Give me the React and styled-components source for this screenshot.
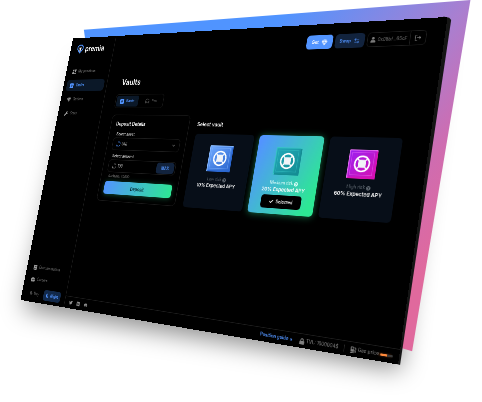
import React, { useEffect, useState } from "react";
import styled, { createGlobalStyle, css } from "styled-components";
import {
  FaTwitter, FaMedium, FaDiscord, FaLock, FaGasPump, FaUser, FaCheck, FaBook,
  FaBriefcase, FaMoon, FaSun, FaGem, FaWrench, FaQuestionCircle, FaArrowRight,
} from "react-icons/fa";
import { LogOut, ArrowLeftRight, ChevronDown, Gem, Headphones } from "lucide-react";

const PLANE = { width: 720, height: 500 };
const SCENE_WIDTH = 482;
/* top-left, top-right, bottom-right and bottom-left of the tilted screen */
const CORNERS = [[73, 38.5], [447.5, 17], [398, 364.5], [20.5, 300]];

/* Perspective matrix that lays the flat screen onto its four corners. */
function planeMatrix(scale) {
  const [[x0, y0], [x1, y1], [x2, y2], [x3, y3]] = CORNERS.map(([x, y]) => [x * scale, y * scale]);
  const dx1 = x1 - x2, dx2 = x3 - x2, sx = x0 - x1 + x2 - x3;
  const dy1 = y1 - y2, dy2 = y3 - y2, sy = y0 - y1 + y2 - y3;
  const det = dx1 * dy2 - dx2 * dy1;
  const g = (sx * dy2 - dx2 * sy) / det;
  const h = (dx1 * sy - sx * dy1) / det;
  const { width: w, height: t } = PLANE;
  return `matrix3d(${[
    (x1 - x0 + g * x1) / w, (y1 - y0 + g * y1) / w, 0, g / w,
    (x3 - x0 + h * x3) / t, (y3 - y0 + h * y3) / t, 0, h / t,
    0, 0, 1, 0,
    x0, y0, 0, 1,
  ].join(",")})`;
}

function useSceneScale() {
  const read = () => window.innerWidth / SCENE_WIDTH;
  const [scale, setScale] = useState(read);
  useEffect(() => {
    const update = () => setScale(read());
    window.addEventListener("resize", update);
    return () => window.removeEventListener("resize", update);
  }, []);
  return scale;
}

const GlobalStyle = createGlobalStyle`
  *, *::before, *::after { box-sizing: border-box; }
  body { margin: 0; background: #fff; }
  button, input, select { font: inherit; color: inherit; border: 0; background: none; padding: 0; margin: 0; }
  h1, h2, h3, p { margin: 0; }
  a { color: inherit; text-decoration: none; }
  svg { flex: none; }
`;

const Scene = styled.div`
  position: relative;
  width: 100%;
  aspect-ratio: 482 / 402;
  overflow: hidden;
  font-family: Inter, "Liberation Sans", sans-serif;
`;
const Layer = styled.div`
  position: absolute;
  inset: 0;
`;
const Backdrop = styled(Layer)`
  background: linear-gradient(128deg, #5094ff 37%, #a97fd0 59%, #cf6cb0 70%, #e0699d 80%);
  clip-path: polygon(17.4% 7.4%, 97.6% 0, 85.5% 87.4%, 24% 65%);
`;
const Shadow = styled(Layer)`
  filter: blur(12px);
  &::before {
    content: "";
    position: absolute;
    inset: 0;
    background: rgba(0, 0, 0, 0.45);
    clip-path: polygon(17% 16%, 91% 12%, 83% 92%, 5% 77%);
  }
`;
const Edge = styled(Layer)`
  background: #151515;
  clip-path: polygon(92% 4.1%, 93.2% 4.4%, 93.6% 5%, 83% 90.8%, 82% 90.4%);
`;
const Screen = styled.div`
  position: absolute;
  top: 0;
  left: 0;
  display: grid;
  grid-template-columns: 106px 1fr;
  width: ${PLANE.width}px;
  height: ${PLANE.height}px;
  transform-origin: 0 0;
  background: #000;
  color: #fff;
  font-size: 7px;
  line-height: 10px;
`;

const Sidebar = styled.aside`
  display: flex;
  flex-direction: column;
  padding: 12px 6px 6px 8px;
  border-right: 1px solid #1c1c1c;
`;
const Logo = styled.a`
  display: flex;
  align-items: center;
  gap: 4px;
  padding-left: 8px;
  margin-bottom: 23px;
  font-size: 14px;
  line-height: 20px;
  font-weight: 600;
`;
const Nav = styled.nav`
  display: flex;
  flex-direction: column;
  gap: 5px;
`;
const NavLink = styled.a`
  display: flex;
  align-items: center;
  gap: 5px;
  height: 22px;
  padding: 0 8px;
  border-radius: 6px;
  color: ${(p) => (p.$active ? "#4b8df0" : "#707070")};
  background: ${(p) => (p.$active ? "#0b1828" : "transparent")};
  font-weight: ${(p) => (p.$active ? 600 : 400)};
  svg { width: 9px; height: 9px; color: ${(p) => (p.$active ? "#5294ff" : "#9a9a9a")}; }
`;
const LowerNav = styled(Nav)`
  margin-top: auto;
  gap: 0;
`;
const ThemeSwitch = styled.div`
  display: flex;
  align-items: center;
  gap: 2px;
  padding-left: 2px;
  margin-top: 5px;
`;
const ThemeButton = styled.button`
  display: flex;
  align-items: center;
  justify-content: center;
  gap: 4px;
  width: 41px;
  height: 19px;
  border-radius: 5px;
  color: ${(p) => (p.$active ? "#5294ff" : "#707070")};
  background: ${(p) => (p.$active ? "#12294a" : "transparent")};
  font-weight: ${(p) => (p.$active ? 600 : 400)};
`;

const Page = styled.div`
  display: flex;
  flex-direction: column;
`;
const TopBar = styled.header`
  display: flex;
  justify-content: flex-end;
  align-items: center;
  gap: 4px;
  padding: 18px 27px 0 0;
`;
const TopButton = styled.button`
  display: flex;
  align-items: center;
  justify-content: center;
  gap: 5px;
  width: ${(p) => (p.$primary ? 45 : 49)}px;
  height: 23px;
  border-radius: 6px;
  font-weight: 600;
  color: ${(p) => (p.$primary ? "#fff" : "#5294ff")};
  background: ${(p) => (p.$primary ? "#5294ff" : "#12233d")};
`;
const Account = styled.div`
  display: flex;
  align-items: center;
  height: 23px;
  border: 1px solid #1e1e1e;
  border-radius: 6px;
  color: #7a7a7a;
`;
const AccountPart = styled.button`
  display: flex;
  align-items: center;
  justify-content: center;
  gap: 3px;
  height: 100%;
  width: ${(p) => (p.$icon ? 24 : 66)}px;
  border-left: ${(p) => (p.$icon ? "1px solid #1e1e1e" : "0")};
`;
const Content = styled.main`
  display: grid;
  grid-template-columns: 170px 1fr;
  column-gap: 16px;
  align-content: start;
  flex: 1;
  padding: 38px 40px 0 27px;
`;
const Heading = styled.div`
  grid-column: 1 / -1;
  display: flex;
  flex-direction: column;
  align-items: flex-start;
  gap: 12px;
  margin-bottom: 12px;
`;
const Title = styled.h1`
  padding-left: 7px;
  font-size: 14px;
  line-height: 20px;
  font-weight: 600;
`;
const Tabs = styled.div`
  display: flex;
  gap: 4px;
  padding: 2px;
  border: 1px solid #1a1a1a;
  border-radius: 6px;
  width: 107px;
`;
const Tab = styled.button`
  display: flex;
  align-items: center;
  justify-content: center;
  gap: 5px;
  flex: 1;
  height: 20px;
  border-radius: 4px;
  color: ${(p) => (p.$active ? "#5294ff" : "#686868")};
  background: ${(p) => (p.$active ? "#0b1828" : "transparent")};
  font-weight: ${(p) => (p.$active ? 600 : 400)};
`;
const DepositCard = styled.form`
  display: flex;
  flex-direction: column;
  padding: 10px 11px 11px;
  border: 1px solid #1a1a1a;
  border-radius: 8px;
`;
const SectionTitle = styled.h2`
  font-size: 9px;
  line-height: 12px;
  font-weight: 600;
`;
const FieldLabel = styled.label`
  padding-left: 5px;
  margin-top: ${(p) => (p.$first ? 9 : 7)}px;
  margin-bottom: 2px;
  line-height: 8px;
  font-weight: 500;
  color: #ddd;
`;
const Field = styled.div`
  display: flex;
  align-items: center;
  gap: 3px;
  height: 23px;
  padding: 0 2px 0 8px;
  border: 1px solid #1e1e1e;
  border-radius: 6px;
`;
const fieldControl = css`
  flex: 1;
  min-width: 0;
  appearance: none;
  outline: 0;
  color: #ccc;
`;
const AssetSelect = styled.select`${fieldControl}`;
const AmountInput = styled.input`${fieldControl}`;
const Caret = styled(ChevronDown)`
  margin-right: 5px;
  color: #999;
`;
const MaxButton = styled.button`
  width: 37px;
  height: 19px;
  border-radius: 5px;
  background: #12233d;
  color: #5294ff;
  font-weight: 600;
`;
const Hint = styled.p`
  padding: 3px 0 5px 4px;
  font-size: 6px;
  line-height: 8px;
  color: #808080;
`;
const DepositButton = styled.button`
  height: 23px;
  border-radius: 5px;
  background: linear-gradient(100deg, #5294ff, #2de894);
  box-shadow: 0 1px 10px rgba(45, 232, 148, 0.35);
  color: #04262c;
  font-size: 8px;
  font-weight: 600;
`;
const VaultSection = styled.section`
  display: flex;
  flex-direction: column;
  gap: 10px;
  padding-top: 10px;
`;
const VaultGrid = styled.div`
  display: grid;
  grid-template-columns: repeat(3, 1fr);
  gap: 10px;
`;
const VaultCard = styled.article`
  display: flex;
  flex-direction: column;
  align-items: center;
  height: 125px;
  padding-top: 19px;
  border-radius: 6px;
  background: ${(p) => (p.$selected ? "linear-gradient(115deg, #5294ff 5%, #2de894 90%)" : "#070e18")};
  box-shadow: ${(p) => (p.$selected ? "0 1px 12px rgba(45, 232, 148, 0.45)" : "none")};
  svg.badge { margin-bottom: 8px; }
`;
const Risk = styled.p`
  display: flex;
  align-items: center;
  gap: 2px;
  color: ${(p) => (p.$selected ? "#e2fffa" : "#606871")};
`;
const Apy = styled.h3`
  font-size: 8px;
  line-height: 10px;
  font-weight: 600;
`;
const SelectedButton = styled.button`
  display: flex;
  align-items: center;
  justify-content: center;
  gap: 4px;
  width: 70px;
  height: 21px;
  margin-top: 4px;
  border-radius: 5px;
  background: #000;
  font-weight: 500;
`;
const Footer = styled.footer`
  display: flex;
  align-items: center;
  gap: 9px;
  height: 21px;
  padding: 0 9px 0 10px;
  border-top: 1px solid #1e1e1e;
  color: #808080;
`;
const Social = styled.a`
  display: flex;
  width: 8px;
  color: #909090;
`;
const Guide = styled.a`
  display: flex;
  align-items: center;
  gap: 2px;
  margin-left: auto;
  margin-right: 2px;
  font-weight: 600;
  color: #5294ff;
  svg { transform: rotate(-45deg); }
`;
const Stat = styled.div`
  display: flex;
  align-items: center;
  gap: 2px;
`;
const Divider = styled.span`
  width: 1px;
  height: 10px;
  background: #242424;
`;
const GasMeter = styled.span`
  width: 18px;
  height: 3px;
  border-radius: 1px;
  background: linear-gradient(90deg, #ff8a3c 55%, #3a3a3a 55%);
  box-shadow: -2px 0 3px rgba(255, 120, 40, 0.4);
`;

const LogoMark = () => (
  <svg width="16" height="18" viewBox="0 0 32 36" fill="none">
    <path d="M16 33 3 18V9l7-6h12l7 6v9z" stroke="#5294ff" strokeWidth="4" strokeLinejoin="round" />
    <path d="M8 12h16l-5 5v8l-3 4-3-4v-8z" fill="#fff" />
  </svg>
);
const PositionsIcon = () => (
  <svg viewBox="0 0 18 18" fill="currentColor">
    <path d="M0 1h8v6H0zM10 0h8v10h-8zM0 10h8v8H0zM10 13h8v4h-8z" />
  </svg>
);
const SafeIcon = () => (
  <svg width="9" height="9" viewBox="0 0 18 18" fill="none">
    <rect width="18" height="18" rx="3" fill="currentColor" />
    <circle cx="9" cy="9" r="3" stroke="#0b1828" strokeWidth="2" />
  </svg>
);
const TokenIcon = ({ color }) => (
  <svg width="9" height="9" viewBox="0 0 18 18" fill="none" stroke={color} strokeWidth="2">
    <path d="M6 2h7l4 4v7l-4 4H3V9M2 16h6" />
  </svg>
);

const TONES = {
  blue: ["#6ea8ff", "#2a66cf", "#8bbcff"],
  teal: ["#22a8b8", "#148d94", "#36c3c4"],
  magenta: ["#9b1ff0", "#d610b4", "#e56cf2"],
};
const VaultBadge = ({ tone }) => {
  const [from, to, rim] = TONES[tone];
  return (
    <svg className="badge" width="45" height="44" viewBox="0 0 90 88">
      <defs>
        <linearGradient id={tone} x1="0" y1="0" x2="1" y2="1">
          <stop stopColor={from} />
          <stop offset="1" stopColor={to} />
        </linearGradient>
      </defs>
      <rect width="90" height="88" rx="3" fill={rim} />
      <path d="M86 4h4v84H4v-4z" fill={to} />
      <rect x="3" y="3" width="82" height="80" fill={`url(#${tone})`} />
      <rect x="9" y="9" width="70" height="68" fill="none" stroke={rim} strokeOpacity=".5" strokeWidth="2" />
      <circle cx="44" cy="43" r="23" fill="none" stroke="#fff" strokeWidth="5" />
      <path d="M29 28l30 30M59 28L29 58" stroke="#fff" strokeWidth="4" />
      <rect x="32" y="31" width="24" height="24" rx="6" fill="#f1f3f7" />
    </svg>
  );
};

const VAULTS = [
  { tone: "blue", risk: "Low risk", apy: "10% Expected APY" },
  { tone: "teal", risk: "Medium risk", apy: "20% Expected APY", selected: true },
  { tone: "magenta", risk: "High risk", apy: "60% Expected APY" },
];

export default function App() {
  const scale = useSceneScale();
  return (
    <>
      <GlobalStyle />
      <Scene>
        <Shadow />
        <Backdrop />
        <Edge />
        <Screen style={{ transform: planeMatrix(scale) }}>
          <Sidebar>
            <Logo href="#"><LogoMark />premia</Logo>
            <Nav>
              <NavLink href="#"><PositionsIcon />My positions</NavLink>
              <NavLink href="#" $active><SafeIcon />Vaults</NavLink>
              <NavLink href="#"><FaGem />Options</NavLink>
              <NavLink href="#"><FaWrench />Stats</NavLink>
            </Nav>
            <LowerNav>
              <NavLink href="#"><FaBook />Documentation</NavLink>
              <NavLink href="#"><FaBriefcase />Careers</NavLink>
            </LowerNav>
            <ThemeSwitch>
              <ThemeButton><FaSun />Day</ThemeButton>
              <ThemeButton $active><FaMoon />Night</ThemeButton>
            </ThemeSwitch>
          </Sidebar>
          <Page>
            <TopBar>
              <TopButton $primary>Get <Gem size={10} /></TopButton>
              <TopButton>Swap <ArrowLeftRight size={10} /></TopButton>
              <Account>
                <AccountPart><FaUser size={9} />0x08bf...65cF</AccountPart>
                <AccountPart $icon aria-label="Log out"><LogOut size={11} /></AccountPart>
              </Account>
            </TopBar>
            <Content>
              <Heading>
                <Title>Vaults</Title>
                <Tabs>
                  <Tab $active><SafeIcon />Basic</Tab>
                  <Tab><Headphones size={10} />Pro</Tab>
                </Tabs>
              </Heading>
              <DepositCard onSubmit={(e) => e.preventDefault()}>
                <SectionTitle>Deposit Details</SectionTitle>
                <FieldLabel htmlFor="asset" $first>Select asset</FieldLabel>
                <Field>
                  <TokenIcon color="#5294ff" />
                  <AssetSelect id="asset"><option>UNI</option></AssetSelect>
                  <Caret size={9} />
                </Field>
                <FieldLabel htmlFor="amount">Select amount</FieldLabel>
                <Field>
                  <TokenIcon color="#777" />
                  <AmountInput id="amount" defaultValue="100" />
                  <MaxButton type="button">MAX</MaxButton>
                </Field>
                <Hint>Available: 40000</Hint>
                <DepositButton>Deposit</DepositButton>
              </DepositCard>
              <VaultSection>
                <SectionTitle>Select vault</SectionTitle>
                <VaultGrid>
                  {VAULTS.map((v) => (
                    <VaultCard key={v.tone} $selected={v.selected}>
                      <VaultBadge tone={v.tone} />
                      <Risk $selected={v.selected}>{v.risk} <FaQuestionCircle /></Risk>
                      <Apy>{v.apy}</Apy>
                      {v.selected && <SelectedButton><FaCheck />Selected</SelectedButton>}
                    </VaultCard>
                  ))}
                </VaultGrid>
              </VaultSection>
            </Content>
            <Footer>
              <Social href="#" aria-label="Twitter"><FaTwitter size={8} /></Social>
              <Social href="#" aria-label="Medium"><FaMedium size={8} /></Social>
              <Social href="#" aria-label="Discord"><FaDiscord size={8} /></Social>
              <Guide href="#">Position guide <FaArrowRight size={5} /></Guide>
              <Stat><FaLock size={9} />TVL: 1000004$</Stat>
              <Divider />
              <Stat><FaGasPump size={9} />Gas price <GasMeter /></Stat>
            </Footer>
          </Page>
        </Screen>
      </Scene>
    </>
  );
}
